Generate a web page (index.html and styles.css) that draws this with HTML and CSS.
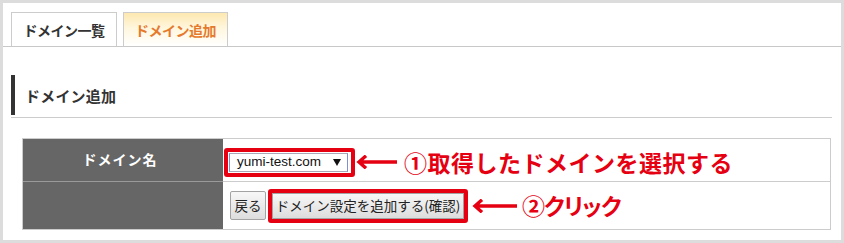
FILE: index.html
```html
<!DOCTYPE html>
<html lang="ja">
<head>
<meta charset="utf-8">
<title>ドメイン追加</title>
<link rel="stylesheet" href="styles.css">
</head>
<body>
<div class="frame">
  <div class="tabs">
    <div class="tab">ドメイン一覧</div>
    <div class="tab tab-active">ドメイン追加</div>
  </div>
  <div class="content">
    <h2 class="heading"><span class="heading-text">ドメイン追加</span></h2>
    <div class="form">
      <div class="label label-first">ドメイン名</div>
      <div class="value value-first">
        <div class="mark mark-select">
          <div class="select">
            <span class="select-text">yumi-test.com</span>
            <svg class="select-arrow" width="8" height="7" viewBox="0 0 8 7"><path d="M0 0H8L4 7Z" fill="#111"/></svg>
          </div>
        </div>
        <svg class="arrow arrow-one" width="41" height="14" viewBox="0 0 41 14"><path d="M41 7H3M10 0.8L3 7L10 13.2" fill="none" stroke="#e50012" stroke-width="3.4"/></svg>
        <span class="note note-one">①取得したドメインを選択する</span>
      </div>
      <div class="label"></div>
      <div class="value">
        <button class="btn btn-back" type="button">戻る</button>
        <div class="mark mark-button">
          <button class="btn btn-confirm" type="button">ドメイン設定を追加する(確認)</button>
        </div>
        <svg class="arrow arrow-two" width="45" height="14" viewBox="0 0 45 14"><path d="M45 7H3M10 0.8L3 7L10 13.2" fill="none" stroke="#e50012" stroke-width="3.4"/></svg>
        <span class="note note-two">②クリック</span>
      </div>
    </div>
  </div>
</div>
</body>
</html>
```

FILE: styles.css
```css
html, body {
  margin: 0;
  padding: 0;
  background: #ffffff;
}

.frame {
  box-sizing: border-box;
  width: 844px;
  height: 243px;
  border: 3px solid #dcdcdc;
  background: #ffffff;
  font-family: "Noto Sans CJK JP", "Noto Sans", sans-serif;
  color: #333333;
}

.tabs {
  display: flex;
  gap: 6px;
  padding: 9px 0 0 8px;
  border-bottom: 1px solid #c8c8c8;
}

.tab {
  box-sizing: border-box;
  width: 106px;
  height: 34px;
  border: 1px solid #cccccc;
  border-bottom: none;
  background: #ffffff;
  display: flex;
  align-items: center;
  justify-content: center;
  font-size: 14px;
  font-weight: bold;
  letter-spacing: -0.5px;
  color: #333333;
  line-height: 1;
}

.tab-active {
  width: 105px;
  color: #e57a2c;
  background: linear-gradient(#fde8b0 0%, #fff6dd 45%, #ffffff 100%);
}

.content {
  padding: 0 9px 0 8px;
}

.heading {
  margin: 28px 0 0;
  padding-bottom: 2px;
  border-bottom: 1px solid #cccccc;
  font-size: 15px;
  font-weight: bold;
}

.heading-text {
  box-sizing: border-box;
  display: flex;
  align-items: center;
  height: 40px;
  border-left: 4px solid #333333;
  padding-left: 10px;
  padding-top: 1px;
  line-height: 1;
  letter-spacing: 0.2px;
  color: #333333;
}

.form {
  display: grid;
  grid-template-columns: 200px 607px;
  grid-template-rows: 43px 47px;
  width: 809px;
  box-sizing: border-box;
  margin: 20px 0 0 11px;
  border: 1px solid #cccccc;
}

.label {
  background: #666666;
  color: #ffffff;
  font-size: 14px;
  font-weight: bold;
  letter-spacing: 1px;
  display: flex;
  align-items: center;
  justify-content: center;
  line-height: 1;
}

.label-first {
  box-sizing: border-box;
  border-bottom: 1px solid #9a9a9a;
  padding-bottom: 2px;
  padding-right: 6px;
}

.value {
  display: flex;
  align-items: center;
  padding-left: 7px;
}

.value-first {
  box-sizing: border-box;
  border-bottom: 1px solid #cccccc;
  padding-left: 1px;
  padding-top: 4px;
}

.mark {
  border: 4px solid #e50012;
  border-radius: 3px;
}

.mark-select {
  padding: 1px 3px 1px 1px;
}

.select {
  box-sizing: border-box;
  width: 119px;
  height: 19px;
  display: flex;
  align-items: center;
  padding-left: 7px;
  padding-right: 6px;
  border: 1px solid #a8a8b8;
  border-left-color: #7f8fcf;
  border-right-color: #7f8fcf;
  background: #ffffff;
  font-family: "Liberation Sans", Arial, sans-serif;
  font-size: 13.5px;
  color: #111111;
  line-height: 1;
}

.select-arrow {
  margin-left: auto;
  display: block;
}

.arrow {
  display: block;
  flex: none;
}

.arrow-one {
  margin-left: 1px;
}

.arrow-two {
  margin-left: 4px;
}

.note {
  color: #e50012;
  font-weight: bold;
  font-size: 23px;
  line-height: 1;
  white-space: nowrap;
}

.note-one {
  margin-left: 7px;
  letter-spacing: 0.5px;
}

.note-two {
  margin-left: 5px;
  font-feature-settings: "palt";
  letter-spacing: -1px;
}

.btn {
  box-sizing: border-box;
  margin: 0;
  padding: 0;
  border: 1px solid #a3a3a3;
  border-radius: 2px;
  background: linear-gradient(#f7f7f7, #dddddd);
  font-family: "Noto Sans CJK JP", "Noto Sans", sans-serif;
  font-size: 13.5px;
  color: #222222;
  line-height: 1;
  display: flex;
  align-items: center;
  justify-content: center;
}

.btn-back {
  width: 36px;
  height: 29px;
  margin-right: 2px;
}

.btn-confirm {
  width: 192px;
  height: 26px;
  border-radius: 0;
  letter-spacing: 0;
}
```
